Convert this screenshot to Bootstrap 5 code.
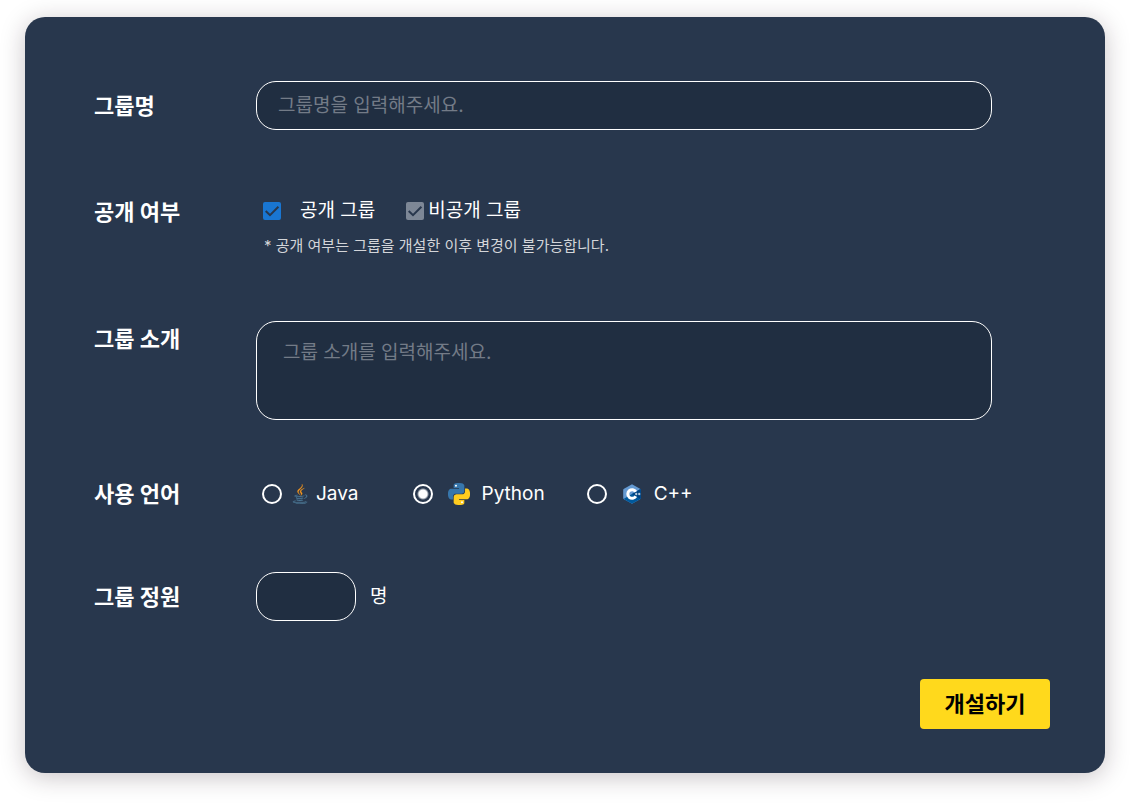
<!DOCTYPE html>
<html lang="ko">
<head>
<meta charset="utf-8">
<meta name="viewport" content="width=device-width, initial-scale=1">
<title>그룹 개설</title>
<link href="https://cdn.jsdelivr.net/npm/bootstrap@5.3.0/dist/css/bootstrap.min.css" rel="stylesheet">
<style>
  body { background: #fff; font-family: Inter, "Noto Sans CJK KR", sans-serif; font-size: 19px; line-height: 30px; color: #fff; }
  .group-form { background: #28374d; border-radius: 20px; margin: 17px 25px 33px; padding: 64px 55px 44px 69px; box-shadow: 0 4px 24px rgba(40, 20, 30, .25); }
  .fields { padding-right: 58px; }
  .field-name { flex: 0 0 162px; font-size: 22px; line-height: 32px; font-weight: 700; color: #fff; margin: 0; }
  .dark-input, .dark-input:focus { background: #202e41; border: 1px solid #fff; border-radius: 20px; color: #fff; font-size: 19px; line-height: 30px; padding: 8px 21px; height: 49px; box-shadow: none; }
  textarea.dark-input, textarea.dark-input:focus { height: 99px; padding: 16px 26px; resize: none; }
  .dark-input::placeholder { color: #737b87; opacity: 1; }
  .seats { width: 100px; }
  .seats-unit { margin-left: 14px; }
  .form-check-input.tick { width: 18px; height: 18px; border: 0; border-radius: 2px; background-color: #7d8796; margin: 0; background-size: 18px;
    background-image: url("data:image/svg+xml,%3Csvg xmlns='http://www.w3.org/2000/svg' viewBox='0 0 18 18'%3E%3Cpath fill='none' stroke='%2328374d' stroke-width='2' d='M2.7 9 7 13.2 15.4 4.8'/%3E%3C/svg%3E"); }
  .form-check-input.tick-blue { background-color: #1976d2; }
  .form-check-input.dot { width: 20px; height: 20px; border: 2px solid #fff; background-color: transparent; background-image: none; margin: 0; }
  .form-check-input.dot:checked { border-color: #fff; background: radial-gradient(circle, #fff 4px, transparent 6px); }
  .visibility { padding-left: 7px; column-gap: 31px; }
  .option-wide { gap: 19px; }
  .option-tight { gap: 4px; }
  .languages { padding-left: 6px; }
  .languages label { gap: 12px; margin-left: 15px; }
  .languages .java-label { gap: 6px; margin-left: 8px; }
  .java-option { margin-right: 54px; }
  .python-option { margin-right: 42px; }
  .notice { font-size: 15px; line-height: 24px; color: #d3d5d9; padding-left: 8px; margin-top: 8px; }
  .row-name { margin-bottom: 66px; }
  .row-open { margin-bottom: 63px; }
  .row-intro { margin-bottom: 58px; }
  .row-intro .field-name { padding-top: 2px; }
  .row-lang { margin-bottom: 62px; }
  .row-seats { margin-bottom: 58px; }
  .btn-open { background: #ffd91c; color: #000; border: 0; border-radius: 4px; width: 130px; height: 50px; font-size: 22px; line-height: 32px; font-weight: 700; padding: 0; }
  .btn-open:hover { background: #f2cb00; color: #000; }
</style>
</head>
<body>
<form class="group-form">
  <div class="fields">
    <div class="d-flex align-items-center row-name">
      <label class="field-name" for="name">그룹명</label>
      <input class="form-control dark-input" id="name" type="text" placeholder="그룹명을 입력해주세요.">
    </div>

    <div class="d-flex align-items-start row-open">
      <div class="field-name" id="openLabel">공개 여부</div>
      <div role="group" aria-labelledby="openLabel">
        <div class="visibility d-flex flex-wrap">
          <div class="d-flex align-items-center option-wide">
            <input class="form-check-input tick tick-blue" type="checkbox" id="open" checked>
            <label for="open">공개 그룹</label>
          </div>
          <div class="d-flex align-items-center option-tight">
            <input class="form-check-input tick" type="checkbox" id="closed" checked>
            <label for="closed">비공개 그룹</label>
          </div>
        </div>
        <div class="notice">* 공개 여부는 그룹을 개설한 이후 변경이 불가능합니다.</div>
      </div>
    </div>

    <div class="d-flex align-items-start row-intro">
      <label class="field-name" for="intro">그룹 소개</label>
      <textarea class="form-control dark-input" id="intro" placeholder="그룹 소개를 입력해주세요."></textarea>
    </div>

    <div class="d-flex align-items-center row-lang">
      <div class="field-name" id="langLabel">사용 언어</div>
      <div class="languages d-flex flex-wrap" role="radiogroup" aria-labelledby="langLabel">
        <div class="d-flex align-items-center java-option">
          <input class="form-check-input dot" type="radio" name="lang" id="java">
          <label for="java" class="d-flex align-items-center java-label">
            <svg width="20" height="20" viewBox="0 0 128 128" aria-hidden="true">
              <path fill="#4d7896" stroke="#4d7896" stroke-width="2" d="M47.617 98.12s-4.767 2.774 3.397 3.71c9.892 1.13 14.947.968 25.845-1.092 0 0 2.871 1.795 6.873 3.351-24.439 10.47-55.308-.607-36.115-5.969zm-2.988-13.665s-5.348 3.959 2.823 4.805c10.567 1.091 18.91 1.18 33.354-1.6 0 0 1.993 2.025 5.132 3.131-29.542 8.64-62.446.68-41.309-6.336zM102.123 108.229s3.529 2.91-3.888 5.159c-14.102 4.272-58.706 5.56-71.094.171-4.451-1.938 3.899-4.625 6.526-5.192 2.739-.593 4.303-.485 4.303-.485-4.953-3.487-32.013 6.85-13.743 9.815 49.821 8.076 90.817-3.637 77.896-9.468zM49.912 70.294s-22.686 5.389-8.033 7.348c6.188.828 18.518.638 30.011-.326 9.39-.789 18.813-2.474 18.813-2.474s-3.308 1.419-5.704 3.053c-23.042 6.061-67.544 3.238-54.731-2.958 10.832-5.239 19.644-4.643 19.644-4.643zM90.609 93.041c23.421-12.167 12.591-23.86 5.032-22.285-1.848.385-2.677.72-2.677.72s.688-1.079 2-1.543c14.953-5.255 26.451 15.503-4.823 23.725 0-.002.359-.327.468-.617zM52.214 126.021c22.476 1.437 57-.8 57.817-11.436 0 0-1.571 4.032-18.577 7.231-19.186 3.612-42.854 3.191-56.887.874 0 .001 2.875 2.381 17.647 3.331z"/>
              <path fill="#f8981d" stroke="#f8981d" stroke-width="2" d="M69.802 61.271c6.025 6.935-1.58 13.17-1.58 13.17s15.289-7.891 8.269-17.777c-6.559-9.215-11.587-13.792 15.635-29.58 0 .001-42.731 10.67-22.324 34.187zM76.491 1.587S89.459 14.563 64.188 34.51c-20.266 16.006-4.621 25.13-.007 35.559-11.831-10.673-20.509-20.07-14.688-28.815C58.041 28.42 81.722 22.195 76.491 1.587z"/>
            </svg>
            Java
          </label>
        </div>
        <div class="d-flex align-items-center python-option">
          <input class="form-check-input dot" type="radio" name="lang" id="python" checked>
          <label for="python" class="d-flex align-items-center">
            <svg width="22" height="22" viewBox="0 0 24 24" aria-hidden="true">
              <path fill="#3776ab" d="M14.25.18l.9.2.73.26.59.3.45.32.34.34.25.34.16.33.1.3.04.26.02.2-.01.13V8.5l-.05.63-.13.55-.21.46-.26.38-.3.31-.33.25-.35.19-.35.14-.33.1-.3.07-.26.04-.21.02H8.77l-.69.05-.59.14-.5.22-.41.27-.33.32-.27.35-.2.36-.15.37-.1.35-.07.32-.04.27-.02.21v3.06H3.17l-.21-.03-.28-.07-.32-.12-.35-.18-.36-.26-.36-.36-.35-.46-.32-.59-.28-.73-.21-.88-.14-1.05-.05-1.23.06-1.22.16-1.04.24-.87.32-.71.36-.57.4-.44.42-.33.42-.24.4-.16.36-.1.32-.05.24-.01h.16l.06.01h8.16v-.83H6.18l-.01-2.75-.02-.37.05-.34.11-.31.17-.28.25-.26.31-.23.38-.2.44-.18.51-.15.58-.12.64-.1.71-.06.77-.04.84-.02 1.27.05z"/>
              <path fill="#ffcc1f" transform="rotate(180 12 12)" d="M14.25.18l.9.2.73.26.59.3.45.32.34.34.25.34.16.33.1.3.04.26.02.2-.01.13V8.5l-.05.63-.13.55-.21.46-.26.38-.3.31-.33.25-.35.19-.35.14-.33.1-.3.07-.26.04-.21.02H8.77l-.69.05-.59.14-.5.22-.41.27-.33.32-.27.35-.2.36-.15.37-.1.35-.07.32-.04.27-.02.21v3.06H3.17l-.21-.03-.28-.07-.32-.12-.35-.18-.36-.26-.36-.36-.35-.46-.32-.59-.28-.73-.21-.88-.14-1.05-.05-1.23.06-1.22.16-1.04.24-.87.32-.71.36-.57.4-.44.42-.33.42-.24.4-.16.36-.1.32-.05.24-.01h.16l.06.01h8.16v-.83H6.18l-.01-2.75-.02-.37.05-.34.11-.31.17-.28.25-.26.31-.23.38-.2.44-.18.51-.15.58-.12.64-.1.71-.06.77-.04.84-.02 1.27.05z"/>
              <circle cx="8.7" cy="3" r="1.1" fill="#fff"/><circle cx="15.3" cy="21" r="1.1" fill="#fff"/>
            </svg>
            Python
          </label>
        </div>
        <div class="d-flex align-items-center">
          <input class="form-check-input dot" type="radio" name="lang" id="cpp">
          <label for="cpp" class="d-flex align-items-center">
            <svg width="20" height="20" viewBox="0 0 20 20" aria-hidden="true">
              <path fill="#659ad2" d="M10 .2 18 4.7q.8.5.8 1.3v8q0 .8-.8 1.3L10 19.8 2 15.3Q1.200 14.800 1.200 14V6q0-.8.8-1.300z"/>
              <path fill="#00599c" d="M1.500 15 10 10l8.500-5q.3.400.3 1v8q0 .8-.8 1.300L10 19.800 2 15.300z"/>
              <path fill="#004482" d="M10 10 18.500 5q.3.400.3 1v8q0 .6-.3 1z"/>
              <path fill="none" stroke="#fff" stroke-width="3" d="M13.800 7.800A4.300 4.300 0 1 0 13.800 12.200"/>
              <path stroke="#fff" stroke-width=".8" d="M13 10h2.400M14.200 8.800v2.400M16 10h2.400M17.200 8.800v2.400"/>
            </svg>
            C++
          </label>
        </div>
      </div>
    </div>

    <div class="d-flex align-items-center row-seats">
      <label class="field-name" for="seats">그룹 정원</label>
      <input class="form-control dark-input seats" id="seats" type="text" inputmode="numeric">
      <span class="seats-unit">명</span>
    </div>
  </div>
  <div class="d-flex justify-content-end">
    <button type="submit" class="btn btn-open">개설하기</button>
  </div>
</form>
<script src="https://cdn.jsdelivr.net/npm/bootstrap@5.3.0/dist/js/bootstrap.bundle.min.js"></script>
</body>
</html>
